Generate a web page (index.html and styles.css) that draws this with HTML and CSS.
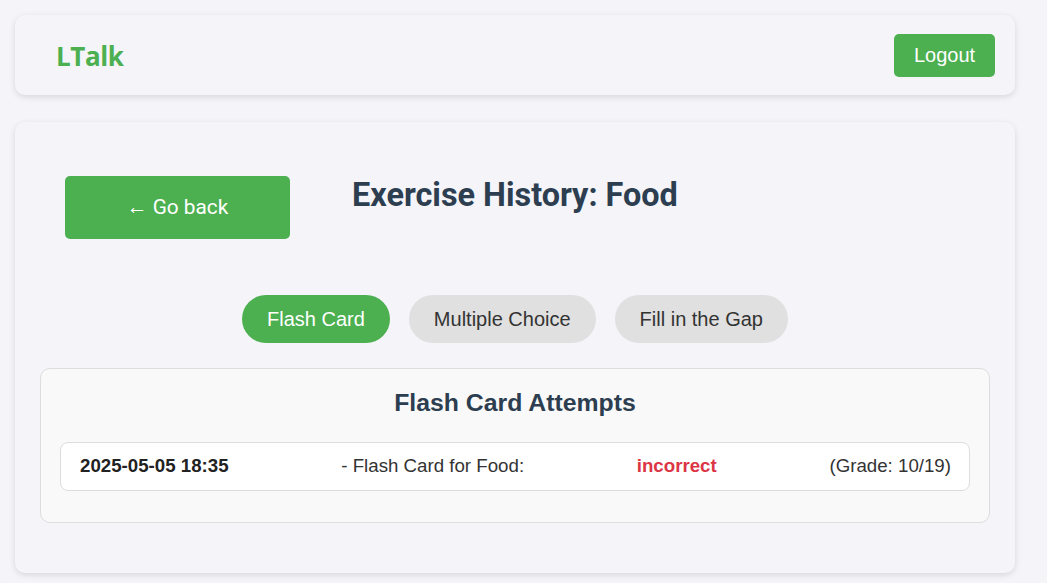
FILE: index.html
```html
<!DOCTYPE html>
<html lang="en">
<head>
<meta charset="utf-8">
<title>LTalk - Exercise History</title>
<link rel="stylesheet" href="styles.css">
</head>
<body>
<header class="topbar">
  <div class="logo">LTalk</div>
  <button class="logout">Logout</button>
</header>
<main class="panel">
  <div class="head-row">
    <button class="back">← Go back</button>
    <h1 class="title">Exercise History: Food</h1>
  </div>
  <nav class="tabs">
    <button class="tab active">Flash Card</button>
    <button class="tab">Multiple Choice</button>
    <button class="tab">Fill in the Gap</button>
  </nav>
  <section class="attempts">
    <h2 class="attempts-title">Flash Card Attempts</h2>
    <div class="attempt">
      <span class="date">2025-05-05 18:35</span>
      <span class="desc">- Flash Card for Food:</span>
      <span class="result">incorrect</span>
      <span class="grade">(Grade: 10/19)</span>
    </div>
  </section>
</main>
</body>
</html>
```
FILE: styles.css
```css
* { box-sizing: border-box; }
html, body { margin: 0; }
body {
  background: #f4f4f9;
  font-family: "Liberation Sans", Arial, sans-serif;
  color: #333;
  padding: 15px 32px 10px 15px;
  width: 1047px;
}
.topbar {
  width: 1000px;
  height: 80px;
  background: #f4f4f9;
  border-radius: 10px;
  box-shadow: 0 2px 6px rgba(0,0,0,0.12);
  display: flex;
  align-items: center;
  justify-content: space-between;
  padding: 0 20px 0 41px;
}
.logo {
  font-family: "Open Sans", "Noto Sans", sans-serif;
  font-weight: 700;
  font-size: 26px;
  color: #4caf50;
  letter-spacing: -0.4px;
  margin-top: 2px;
}
.logout {
  background: #4caf50;
  color: #fff;
  border: none;
  border-radius: 5px;
  font-family: "Liberation Sans", Arial, sans-serif;
  font-size: 20px;
  width: 101px;
  height: 43px;
  padding: 0;
  margin-top: 1px;
}
.panel {
  width: 1000px;
  margin-top: 27px;
  background: #f4f4f9;
  border-radius: 10px;
  box-shadow: 0 2px 6px rgba(0,0,0,0.12);
  padding: 54px 25px 50px;
}
.head-row {
  display: flex;
  align-items: flex-start;
  padding-left: 25px;
  gap: 62px;
}
.back {
  width: 225px;
  height: 63px;
  background: #4caf50;
  color: #fff;
  border: none;
  border-radius: 5px;
  font-family: Roboto, sans-serif;
  font-size: 20.8px;
  padding: 0 0 2px;
}
.title {
  margin: 0;
  font-family: Roboto, sans-serif;
  font-weight: 700;
  font-size: 32.4px;
  line-height: 38px;
  color: #2c3e50;
}
.tabs {
  display: flex;
  justify-content: center;
  gap: 19px;
  margin-top: 56px;
}
.tab {
  font-family: "Liberation Sans", Arial, sans-serif;
  font-size: 20px;
  height: 48px;
  padding: 0 25px;
  border: none;
  border-radius: 24px;
  background: #e0e0e0;
  color: #333;
}
.tab.active {
  background: #4caf50;
  color: #fff;
}
.attempts {
  margin-top: 25px;
  background: #f9f9f9;
  border: 1px solid #ddd;
  border-radius: 10px;
  padding: 18px 19px 31px;
}
.attempts-title {
  margin: 0 0 23px;
  text-align: center;
  font-size: 24.8px;
  line-height: 32px;
  color: #2c3e50;
  font-weight: 700;
}
.attempt {
  display: flex;
  justify-content: space-between;
  align-items: center;
  height: 49px;
  background: #fff;
  border: 1px solid #ddd;
  border-radius: 8px;
  padding: 0 18px 1px 19px;
  font-size: 18.7px;
  color: #333;
}
.date { font-weight: 700; color: #222; }
.result { font-weight: 700; color: #dc3545; }
```
